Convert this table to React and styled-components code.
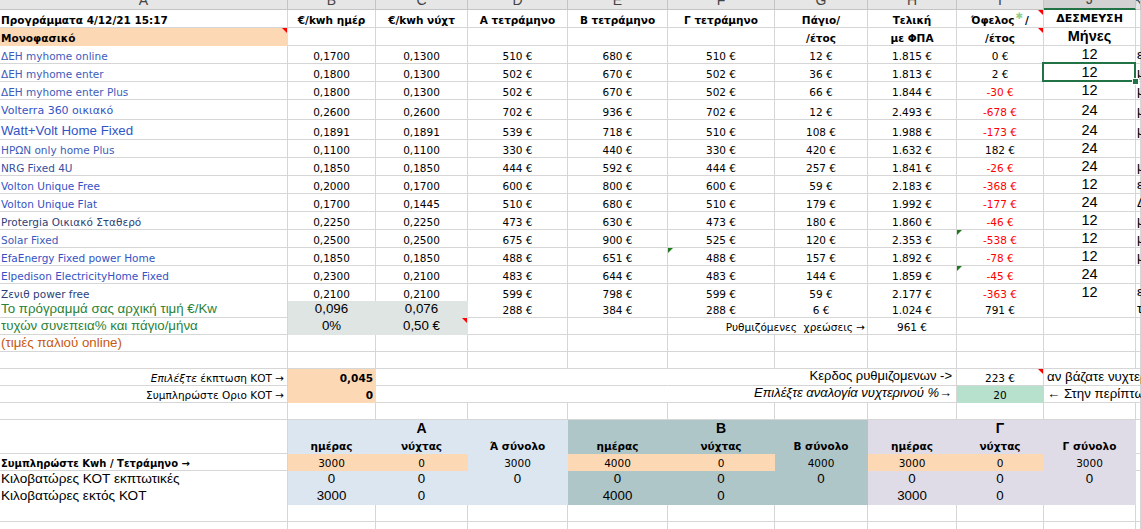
import React from 'react';
import styled, { createGlobalStyle } from 'styled-components';

const GlobalStyle = createGlobalStyle`
  html, body { margin: 0; padding: 0; background: #fff; }
  body { font-family: "DejaVu Sans", Verdana, sans-serif; }
`;

const COLS = '288px 88px 92px 100px 100px 107px 93px 89px 87px 92px 1fr';
const GRID = '#d6d6d6';
const TAHOMA = '"DejaVu Sans", Verdana, sans-serif';
const ARIAL = '"Liberation Sans", Arial, sans-serif';

const PEACH = '#fcd8b4';
const SAGE = '#dfe5e3';
const BLUE = '#dce6f0';
const TEAL = '#aec6c8';
const LAV = '#e0dce7';
const MINT = '#b8e1cd';
const RED = '#ff0000';

const Sheet = styled.div`
  display: flex;
  flex-direction: column;
  width: 1141px;
  height: 529px;
  overflow: hidden;
  background: #fff;
`;

const Row = styled.div`
  display: grid;
  grid-template-columns: ${COLS};
  height: ${p => p.$h || 17}px;
  flex: none;
`;

// column letters strip, cut off at the top like the scrolled sheet
const ColHead = styled.div`
  display: flex;
  justify-content: center;
  align-items: flex-end;
  overflow: hidden;
  box-sizing: border-box;
  background: ${p => (p.$active ? '#d2d2d2' : '#e6e6e6')};
  border-right: 1px solid #c4c4c4;
  border-bottom: ${p => (p.$active ? '2px solid #217346' : '1px solid #c4c4c4')};
  font-family: ${ARIAL};
  font-size: 14px;
  color: #444;
  span { line-height: 18px; }
`;

const Cell = styled.div`
  position: relative;
  grid-column: span ${p => p.$span || 1};
  display: flex;
  align-items: flex-end;
  justify-content: ${p => ({ l: 'flex-start', r: 'flex-end' }[p.$align] || 'center')};
  min-width: 0;
  box-sizing: border-box;
  padding: 0 ${p => p.$pr ?? 2}px ${p => p.$pb ?? 1}px ${p => p.$pl ?? 2}px;
  background: ${p => p.$fill || '#fff'};
  border-right: 1px solid ${p => p.$fill || (p.$open ? '#fff' : GRID)};
  border-bottom: 1px solid ${p => p.$fill || GRID};
  white-space: nowrap;
  font-family: ${p => (p.$arial ? ARIAL : TAHOMA)};
  font-size: ${p => p.$size || (p.$arial ? 13.3 : 10.5)}px;
  font-weight: ${p => (p.$bold ? 700 : 400)};
  font-style: ${p => (p.$italic ? 'italic' : 'normal')};
  color: ${p => p.$color || '#000'};
  line-height: 1.15;
`;

const Mark = styled.i`
  position: absolute;
  top: 0;
  ${p => (p.$left ? 'left: 0;' : 'right: 0;')}
  width: 0;
  height: 0;
  border-top: 5px solid ${p => (p.$green ? '#1f7a1f' : RED)};
  ${p => (p.$left ? 'border-right: 5px solid transparent;' : 'border-left: 5px solid transparent;')}
`;

const Star = styled.span`
  color: #8fcf8f;
  font-size: 9px;
  position: relative;
  top: -5px;
  margin: 0 2px 0 1px;
`;

const Selection = styled.span`
  position: absolute;
  left: -2px;
  top: -2px;
  right: -1px;
  bottom: -1px;
  border: 2px solid #217346;
  z-index: 2;
  &::after {
    content: '';
    position: absolute;
    right: -5px;
    bottom: -5px;
    width: 5px;
    height: 5px;
    background: #217346;
    border: 1px solid #fff;
  }
`;

const plans = [
  { name: 'ΔΕΗ myhome online', color: '#3d5cb9', v: ['0,1700', '0,1300', '510 €', '680 €', '510 €', '12 €', '1.815 €', '0 €'], j: '12', k: 'ε' },
  { name: 'ΔΕΗ myhome enter', color: '#3d5cb9', v: ['0,1800', '0,1300', '502 €', '670 €', '502 €', '36 €', '1.813 €', '2 €'], j: '12', k: 'μ', selected: true },
  { name: 'ΔΕΗ myhome enter Plus', color: '#3d5cb9', v: ['0,1800', '0,1300', '502 €', '670 €', '502 €', '66 €', '1.844 €', '-30 €'], j: '12', k: 'μ' },
  { name: 'Volterra 360 οικιακό', color: '#3355c4', size: 11, v: ['0,2600', '0,2600', '702 €', '936 €', '702 €', '12 €', '2.493 €', '-678 €'], j: '24', k: 'μ', h: 20 },
  { name: 'Watt+Volt Home Fixed', color: '#2f55c8', arial: true, v: ['0,1891', '0,1891', '539 €', '718 €', '510 €', '108 €', '1.988 €', '-173 €'], j: '24', k: 'μ', h: 20 },
  { name: 'ΗΡΩΝ only home Plus', color: '#3d5cb9', v: ['0,1100', '0,1100', '330 €', '440 €', '330 €', '420 €', '1.632 €', '182 €'], j: '24', k: '' },
  { name: 'NRG Fixed 4U', color: '#34509e', v: ['0,1850', '0,1850', '444 €', '592 €', '444 €', '257 €', '1.841 €', '-26 €'], j: '24', k: 'μ' },
  { name: 'Volton Unique Free', color: '#3552c4', v: ['0,2000', '0,1700', '600 €', '800 €', '600 €', '59 €', '2.183 €', '-368 €'], j: '12', k: 'ε' },
  { name: 'Volton Unique Flat', color: '#3552c4', v: ['0,1700', '0,1445', '510 €', '680 €', '510 €', '179 €', '1.992 €', '-177 €'], j: '24', k: 'Δ' },
  { name: 'Protergia Οικιακό Σταθερό', color: '#2d3f78', v: ['0,2250', '0,2250', '473 €', '630 €', '473 €', '180 €', '1.860 €', '-46 €'], j: '12', k: 'μ' },
  { name: 'Solar Fixed', color: '#3b5bb9', v: ['0,2500', '0,2500', '675 €', '900 €', '525 €', '120 €', '2.353 €', '-538 €'], j: '12', k: 'μ', markI: true },
  { name: 'EfaEnergy Fixed power Home', color: '#3552c4', v: ['0,1850', '0,1850', '488 €', '651 €', '488 €', '157 €', '1.892 €', '-78 €'], j: '12', k: 'μ', markF: true },
  { name: 'Elpedison ElectricityHome Fixed', color: '#3552c4', v: ['0,2300', '0,2100', '483 €', '644 €', '483 €', '144 €', '1.859 €', '-45 €'], j: '24', k: '', markI: true },
  { name: 'Ζενιθ power free', color: '#2d3f78', v: ['0,2100', '0,2100', '599 €', '798 €', '599 €', '59 €', '2.177 €', '-363 €'], j: '12', k: 'ε', h: 17 },
];

const LETTERS = ['A', 'B', 'C', 'D', 'E', 'F', 'G', 'H', 'I', 'J', 'K'];

const blanks = (n, key = 'b') => Array.from({ length: n }, (_, i) => <Cell key={key + i} />);

const PlanRow = ({ p }) => (
  <Row $h={p.h || 18}>
    <Cell $align="l" $pl={1} $color={p.color} $arial={p.arial} $size={p.size}>{p.name}</Cell>
    {p.v.map((val, i) => (
      <Cell key={i} $color={i === 7 && val.startsWith('-') ? RED : '#000'}>
        {i === 4 && p.markF && <Mark $left $green />}
        {i === 7 && p.markI && <Mark $left $green />}
        {val}
      </Cell>
    ))}
    <Cell $arial $size={14.5} $pb={0}>
      {p.j}
      {p.selected && <Selection />}
    </Cell>
    <Cell $align="l" $pl={1} $arial>{p.k}</Cell>
  </Row>
);

export default function App() {
  return (
    <>
      <GlobalStyle />
      <Sheet>
        <Row $h={10}>
          {LETTERS.map(l => (
            <ColHead key={l} $active={l === 'J'}><span>{l}</span></ColHead>
          ))}
        </Row>

        <Row $h={18}>
          <Cell $align="l" $pl={1} $bold>Προγράμματα 4/12/21 15:17</Cell>
          <Cell $bold>€/kwh ημέρ</Cell>
          <Cell $bold>€/kwh νύχτ</Cell>
          <Cell $bold>Α τετράμηνο</Cell>
          <Cell $bold>Β τετράμηνο</Cell>
          <Cell $bold>Γ τετράμηνο</Cell>
          <Cell $bold>Πάγιο/</Cell>
          <Cell $bold>Τελική</Cell>
          <Cell $bold>Όφελος<Star>✱</Star>/<Mark /></Cell>
          <Cell $bold $size={11}>ΔΕΣΜΕΥΣΗ</Cell>
          <Cell />
        </Row>

        <Row $h={18}>
          <Cell $align="l" $pl={1} $bold $fill={PEACH}>Μονοφασικό<Mark /></Cell>
          <Cell /><Cell /><Cell /><Cell /><Cell />
          <Cell $bold>/έτος</Cell>
          <Cell $bold>με ΦΠΑ</Cell>
          <Cell $bold>/έτος<Mark /></Cell>
          <Cell $bold $arial $size={14.5} $pb={0}>Μήνες</Cell>
          <Cell />
        </Row>

        {plans.map(p => <PlanRow key={p.name} p={p} />)}

        <Row>
          <Cell $align="l" $pl={1} $arial $color="#2a8236">Το πρόγραμμά σας αρχική τιμή €/Kw</Cell>
          <Cell $arial $fill={SAGE}>0,096</Cell>
          <Cell $arial $fill={SAGE}>0,076</Cell>
          <Cell>288 €</Cell>
          <Cell>384 €</Cell>
          <Cell>288 €</Cell>
          <Cell>6 €</Cell>
          <Cell>1.024 €</Cell>
          <Cell>791 €</Cell>
          <Cell />
          <Cell $align="l" $pl={1} $arial>τ</Cell>
        </Row>

        <Row>
          <Cell $align="l" $pl={1} $arial $color="#2a8236">τυχών συνεπεια% και πάγιο/μήνα</Cell>
          <Cell $arial $fill={SAGE}>0%</Cell>
          <Cell $arial $fill={SAGE}>0,50 €<Mark /></Cell>
          <Cell /><Cell />
          <Cell $span={2} $align="r" $pr={2}>Ρυθμιζόμενες&nbsp; χρεώσεις →</Cell>
          <Cell>961 €</Cell>
          <Cell /><Cell /><Cell />
        </Row>

        <Row>
          <Cell $align="l" $pl={1} $arial $color="#c55a11">(τιμές παλιού online)</Cell>
          {blanks(10)}
        </Row>

        <Row>{blanks(11)}</Row>

        <Row>
          <Cell $align="r" $pr={3}><em>Επιλέξτε</em>&nbsp;έκπτωση ΚΟΤ →</Cell>
          <Cell $align="r" $pr={2} $bold $fill={PEACH}>0,045</Cell>
          <Cell $span={3} $open />
          <Cell $span={3} $align="r" $pr={4} $arial $size={13}>Κερδος ρυθμιζομενων -&gt;</Cell>
          <Cell>223 €<Mark /></Cell>
          <Cell $span={2} $align="l" $pl={3} $arial>αν βάζατε νυχτερινό</Cell>
        </Row>

        <Row>
          <Cell $align="r" $pr={3}>Συμπληρώστε Οριο ΚΟΤ →</Cell>
          <Cell $align="r" $pr={2} $bold $fill={PEACH}>0</Cell>
          <Cell $span={6} $align="r" $pr={4} $arial $italic $size={13}>Επιλέξτε αναλογία νυχτερινού %→</Cell>
          <Cell $fill={MINT}>20</Cell>
          <Cell $span={2} $align="l" $pl={3} $arial>← Στην περίπτωση</Cell>
        </Row>

        <Row>{blanks(11)}</Row>

        <Row>
          <Cell />
          <Cell $fill={BLUE} />
          <Cell $fill={BLUE} $arial $bold $size={14}>Α</Cell>
          <Cell $fill={BLUE} />
          <Cell $fill={TEAL} />
          <Cell $fill={TEAL} $arial $bold $size={14}>Β</Cell>
          <Cell $fill={TEAL} />
          <Cell $fill={LAV} />
          <Cell $fill={LAV} $arial $bold $size={14}>Γ</Cell>
          <Cell $fill={LAV} />
          <Cell />
        </Row>

        <Row>
          <Cell />
          <Cell $fill={BLUE} $bold>ημέρας</Cell>
          <Cell $fill={BLUE} $bold>νύχτας</Cell>
          <Cell $fill={BLUE} $bold>Ά σύνολο</Cell>
          <Cell $fill={TEAL} $bold>ημέρας</Cell>
          <Cell $fill={TEAL} $bold>νύχτας</Cell>
          <Cell $fill={TEAL} $bold>Β σύνολο</Cell>
          <Cell $fill={LAV} $bold>ημέρας</Cell>
          <Cell $fill={LAV} $bold>νύχτας</Cell>
          <Cell $fill={LAV} $bold>Γ σύνολο</Cell>
          <Cell />
        </Row>

        <Row>
          <Cell $align="l" $pl={1} $bold $size={10}>Συμπληρώστε Kwh / Τετράμηνο →</Cell>
          <Cell $fill={PEACH}>3000</Cell>
          <Cell $fill={PEACH}>0</Cell>
          <Cell $fill={BLUE}>3000</Cell>
          <Cell $fill={PEACH}>4000</Cell>
          <Cell $fill={PEACH}>0</Cell>
          <Cell $fill={TEAL}>4000</Cell>
          <Cell $fill={PEACH}>3000</Cell>
          <Cell $fill={PEACH}>0</Cell>
          <Cell $fill={LAV}>3000</Cell>
          <Cell />
        </Row>

        <Row>
          <Cell $align="l" $pl={1} $arial $size={13.6}>Κιλοβατώρες ΚΟΤ εκπτωτικές</Cell>
          <Cell $fill={BLUE} $arial>0</Cell>
          <Cell $fill={BLUE} $arial>0</Cell>
          <Cell $fill={BLUE} $arial>0</Cell>
          <Cell $fill={TEAL} $arial>0</Cell>
          <Cell $fill={TEAL} $arial>0</Cell>
          <Cell $fill={TEAL} $arial>0</Cell>
          <Cell $fill={LAV} $arial>0</Cell>
          <Cell $fill={LAV} $arial>0</Cell>
          <Cell $fill={LAV} $arial>0</Cell>
          <Cell />
        </Row>

        <Row>
          <Cell $align="l" $pl={1} $arial $size={13.6}>Κιλοβατώρες εκτός ΚΟΤ</Cell>
          <Cell $fill={BLUE} $arial>3000</Cell>
          <Cell $fill={BLUE} $arial>0</Cell>
          <Cell $fill={BLUE} />
          <Cell $fill={TEAL} $arial>4000</Cell>
          <Cell $fill={TEAL} $arial>0</Cell>
          <Cell $fill={TEAL} />
          <Cell $fill={LAV} $arial>3000</Cell>
          <Cell $fill={LAV} $arial>0</Cell>
          <Cell $fill={LAV} />
          <Cell />
        </Row>

        <Row>{blanks(11)}</Row>
        <Row>{blanks(11)}</Row>
      </Sheet>
    </>
  );
}
